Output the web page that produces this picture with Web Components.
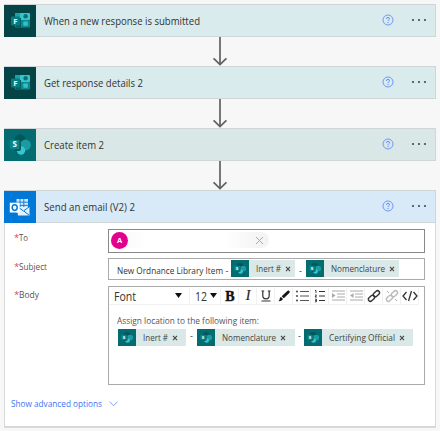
<!DOCTYPE html>
<html lang="en">
<head>
<meta charset="utf-8">
<title>Flow</title>
<style>
html,body{margin:0;height:431px;overflow:hidden;background:#f7f7f7}
body{font-family:"Open Sans","Noto Sans",sans-serif;color:#333;font-size:10px}
</style>
</head>
<body>
<flow-canvas></flow-canvas>
<script>
const define = (name, html, init) => customElements.define(name, class extends HTMLElement {
  connectedCallback() {
    if (this.shadowRoot) return;
    const root = this.attachShadow({ mode: 'open' });
    root.innerHTML = typeof html === 'function' ? html(this) : html;
    if (init) init(this, root);
  }
});

/* A line of text condensed so that it fills the width given in "w". */
define('fit-text', e => `<style>:host{display:block;flex:none;white-space:pre;width:${e.getAttribute('w')}px}span{display:inline-block;transform-origin:0 50%}</style><span>${e.getAttribute('text')}</span>`,
  (e, root) => {
    const s = root.querySelector('span');
    const natural = s.getBoundingClientRect().width;
    if (natural) s.style.transform = `scaleX(${+e.getAttribute('w') / natural})`;
  });

const GLYPHS = {
  forms: `<svg viewBox="0 0 32 32"><rect width="32" height="32" fill="#044447"/><rect x="11" y="8" width="15" height="7" rx="1" fill="#35c5cc"/><rect x="11" y="15" width="15" height="7.5" rx="1" fill="#0b8b90"/><path d="M11 8h5v7h-5z" fill="#229ea4"/><circle cx="21.6" cy="11.3" r="2.2" fill="#097277"/><rect x="19.3" y="16.5" width="4.5" height="4.2" rx=".8" fill="#38bfc6"/><rect x="12" y="13" width="5" height="9" fill="#045c60"/><rect x="7" y="11.6" width="9" height="9" rx=".8" fill="#047d82"/><text x="11.4" y="18.9" text-anchor="middle" font-size="7.8" font-weight="700" fill="#e9f6f6">F</text></svg>`,
  sharepoint: `<svg viewBox="0 0 32 32" preserveAspectRatio="none"><rect width="32" height="32" fill="#036c70"/><circle cx="16" cy="11.5" r="6" fill="#04565b"/><circle cx="21.5" cy="16" r="5.4" fill="#1a9ba1"/><circle cx="17" cy="21.5" r="4.2" fill="#37c6d0"/><path d="M11 14h6v6q0 2-2 2h-4z" fill="#04595d"/><rect x="6" y="10.7" width="9.6" height="9.6" rx="1" fill="#03878a"/><text x="10.8" y="18.4" text-anchor="middle" font-size="8" font-weight="700" fill="#fff">S</text></svg>`,
  outlook: `<svg viewBox="0 0 32 32"><rect width="32" height="32" fill="#0078d7"/><path d="M12.5 8H24v13.5H12.5z" fill="#cfe5f8"/><path d="M12.5 11.2H24M12.5 14.4H24M16 8v11M19.8 8v11" stroke="#0078d7" stroke-width=".9"/><path d="M13 16h12.5v8.5H14z" fill="#e2f0fb"/><path d="M14 16l5.5 4 6-4.4M20 20.2l5.3 4.2" fill="none" stroke="#0078d7" stroke-width="1"/><rect x="5.8" y="11.7" width="9.8" height="9.8" fill="#fff"/><ellipse cx="10.7" cy="16.6" rx="2.5" ry="2.8" fill="none" stroke="#0078d7" stroke-width="1.5"/></svg>`
};
define('app-icon', e => `<style>:host{display:block;flex:none}svg{display:block;width:100%;height:100%}</style>${GLYPHS[e.getAttribute('name')]}`);

define('step-header', e => `<style>
:host{display:flex;align-items:center;height:33px;box-sizing:border-box;border:1px solid #d0d6d7;background:${e.getAttribute('tint')};font-size:10.6px;color:#333}
app-icon{width:32px;height:32px;margin:0 7.5px 0 -1px}
fit-text{line-height:16px}
.help{margin-left:auto;width:12px;height:12px;margin-right:17px;margin-top:-1px}
.dots{width:16px;height:4px;margin-right:8px;margin-top:-1px}
svg{display:block}
</style><app-icon name="${e.getAttribute('icon')}"></app-icon><fit-text w="${e.getAttribute('w')}" text="${e.getAttribute('label')}"></fit-text>
<svg class="help" viewBox="0 0 12 12"><circle cx="6" cy="6" r="5" fill="none" stroke="#7197f8" stroke-width="1"/><path d="M4.5 4.9Q4.5 3.4 6 3.4T7.5 4.8C7.5 5.8 6 5.8 6 7.1" fill="none" stroke="#6089f8" stroke-width="1"/><circle cx="6" cy="8.6" r=".65" fill="#6089f8"/></svg>
<svg class="dots" viewBox="0 0 16 4"><g fill="#494949"><circle cx="2" cy="2" r="1.1"/><circle cx="8" cy="2" r="1.1"/><circle cx="14" cy="2" r="1.1"/></g></svg>`);

define('flow-arrow', `<style>:host{display:block;height:29px}svg{display:block;margin:0 auto}</style><svg width="16" height="29" viewBox="0 0 16 29"><path d="M8 0v28" stroke="#777" stroke-width="2"/><path d="M1.6 21.3L8 27.6l6.4-6.3" fill="none" stroke="#626262" stroke-width="1.8"/></svg>`);

define('field-row', e => `<style>:host{display:flex;align-items:flex-start}
.label{display:flex;width:94px;padding-left:9px;flex:none;color:#555;font-size:9.6px;line-height:14px;padding-top:${e.getAttribute('drop')}px}
i{font-style:normal;color:#e5484d;width:5px;flex:none}</style><div class="label"><i>*</i><fit-text w="${e.getAttribute('w')}" text="${e.getAttribute('label')}"></fit-text></div><slot></slot>`);

define('input-box', e => `<style>:host{display:flex;box-sizing:border-box;width:317px;border:1px solid ${e.getAttribute('line')||'#aaa'};background:#fff}</style><slot></slot>`);

/* Dynamic content token: tile, caption and remove mark. */
define('value-token', e => `<style>:host{display:flex;flex:none;align-items:center;box-sizing:border-box;height:17px;width:${e.getAttribute('size')}px;background:#dae9e8;font-size:9px;color:#444}
app-icon{width:18px;height:17px;margin-right:7px;overflow:hidden}fit-text{line-height:14px}svg{margin-left:4px;margin-top:1px}</style>
<app-icon name="sharepoint"></app-icon><fit-text w="${e.getAttribute('w')}" text="${e.getAttribute('label')}"></fit-text><svg width="6" height="6" viewBox="0 0 6 6"><path d="M1 .8l4 4.4M5 .8L1 5.2" stroke="#444" stroke-width="1.1"/></svg>`);

define('person-pill', `<style>:host{display:flex;align-items:center;width:158px;height:16px;margin:2px 0 0 2px;border-radius:8px;background:linear-gradient(90deg,#f6f6f6,#fff 22%,#fff 72%,#f4f4f4 94%)}
b{width:17px;height:17px;border-radius:50%;background:#e3008c;color:#fff;font-size:7.5px;line-height:17px;text-align:center;flex:none}svg{margin-left:auto;margin-right:5px}</style>
<b>A</b><svg width="9" height="9" viewBox="0 0 9 9"><path d="M1 1l7 7M8 1L1 8" stroke="#aaa" stroke-width="1"/></svg>`);

const LIST = '<path d="M6 3.5h9M6 8h9M6 12.5h9" stroke="#555" stroke-width="1.1"/>';
const INDENT = d => `<g stroke="#aaa" stroke-width="1"><path d="M2 3h13M7 6h8M7 9h8M2 12h13" fill="none"/></g><path d="${d}" fill="#aaa"/>`;
const LINK = c => `<g fill="none" stroke="${c}" stroke-width="1.4"><rect x="-3.5" y="-2" width="7" height="4" rx="2" transform="translate(5.5 10.3) rotate(-43)"/><rect x="-3.5" y="-2" width="7" height="4" rx="2" transform="translate(10.4 5.7) rotate(-43)"/></g>`;
const TOOLS = [
  '<text x="8" y="12.6" text-anchor="middle" font-family="Liberation Serif" font-size="14" font-weight="700" fill="#111" stroke="#111" stroke-width=".4">B</text>',
  '<text x="8" y="12.4" text-anchor="middle" font-family="Liberation Serif" font-size="14" font-style="italic" fill="#222" stroke="#222" stroke-width=".2">I</text>',
  '<path d="M4.8 3v4.8q0 3 3.2 3t3.2-3V3M3.5 3h2.7M9.8 3h2.7M3.5 13h9" fill="none" stroke="#333" stroke-width="1.2"/>',
  '<path d="M13.2 2.8q1.2 1 .1 2.2L7.8 10.2 5.7 8.3l5.6-5.2q1-1 1.9-.3zM5 9l2 1.9Q5.6 13.4 2.4 13.2 3.7 12 3.8 10.4 4 9.2 5 9z" fill="#151515"/>',
  LIST + '<g fill="#555"><circle cx="3" cy="3.5" r="1.1"/><circle cx="3" cy="8" r="1.1"/><circle cx="3" cy="12.5" r="1.1"/></g>',
  '<path d="M7 3.5h6M7 8h6M7 12.5h6" stroke="#333" stroke-width="1.2"/><path d="M3 2.5h1V5M3 7h1.5L3 9h2M3 11.2h1.5v1.3H3.3h1.2v1.3H3" fill="none" stroke="#333" stroke-width=".9"/>',
  INDENT('M2 5v5l3.5-2.5z'), INDENT('M5.5 5v5L2 7.5z'),
  LINK('#333'), LINK('#bbb') + '<path d="M3 3l2 2M11 11l2 2" stroke="#bbb"/>',
  '<path d="M4.5 4L1 8l3.5 4M11.5 4L15 8l-3.5 4M9.5 3l-3 10" fill="none" stroke="#333" stroke-width="1.3"/>'
];
define('format-bar', `<style>:host{display:flex;height:18px;align-items:center;color:#333;font-size:12px}
div{display:flex;align-items:center;height:17px;box-sizing:border-box;border:solid #f1f1f1;border-width:0 1px 1px 0}
.font{width:81px;padding:0 7px 0 5px;justify-content:space-between}.size{width:31px;padding:0 3px 0 5px;justify-content:space-between}
.tool{width:18px;justify-content:center}svg{display:block;flex:none}fit-text{line-height:16px;padding-top:2px}</style>
<div class="font"><fit-text w="22" text="Font"></fit-text><svg width="7" height="5"><path d="M0 0h7L3.5 5z" fill="#111"/></svg></div>
<div class="size"><fit-text w="12" text="12"></fit-text><svg width="7" height="5"><path d="M0 0h7L3.5 5z" fill="#111"/></svg></div>
${TOOLS.map(t => `<div class="tool"><svg width="16" height="16" viewBox="0 0 16 16">${t}</svg></div>`).join('')}`);

define('advanced-toggle', `<style>:host{display:flex;align-items:center;gap:7px;color:#3b74f5;font-size:9.5px;line-height:14px;padding:12px 0 0 6px}</style>
<fit-text w="91" text="Show advanced options"></fit-text><svg width="9" height="6" viewBox="0 0 9 6"><path d="M.5.7l4 4 4-4" fill="none" stroke="#7d9ff5"/></svg>`);

define('email-form', `<style>:host{display:block;height:205px;box-sizing:border-box;background:#fff;border:1px solid #d8d8d8;border-width:0 1px 2px 1px;padding-top:6px}
.to{height:24px}.subject{height:22px}.body{height:99px;flex-direction:column}
field-row+field-row{margin-top:5px}field-row:nth-of-type(3){margin-top:6px}
.line{display:flex;align-items:center;font-size:9px;color:#333}.subject .line{padding-left:8px;height:19px}
.dash{width:11px;text-align:center;flex:none;line-height:12px}
.copy{padding:9px 0 0 8px;font-size:9px;line-height:13px;color:#555}
.tokens{padding-left:9px;margin-top:2px;height:17px}
.low{padding-top:5px}.high{padding-bottom:3px}</style>
<field-row label="To" w="9" drop="2"><input-box class="to" line="#888"><person-pill></person-pill></input-box></field-row>
<field-row label="Subject" w="28" drop="2"><input-box class="subject"><div class="line"><fit-text w="106" text="New Ordnance Library Item" style="padding-top:4px"></fit-text><span class="dash low" style="width:8px">-</span><value-token label="Inert #" w="25" size="64"></value-token><span class="dash low">-</span><value-token label="Nomenclature" w="54" size="93"></value-token></div></input-box></field-row>
<field-row label="Body" w="20" drop="2"><input-box class="body"><format-bar></format-bar><div class="copy"><fit-text w="142" text="Assign location to the following item:"></fit-text></div><div class="line tokens"><value-token label="Inert #" w="25" size="68"></value-token><span class="dash high">-</span><value-token label="Nomenclature" w="54" size="98"></value-token><span class="dash high" style="width:9px">-</span><value-token label="Certifying Official" w="66" size="109"></value-token></div></input-box></field-row>
<advanced-toggle></advanced-toggle>`);

define('flow-canvas', `<style>:host{display:block;padding:4px 4px 0}</style>
<step-header icon="forms" tint="#d9ebed" label="When a new response is submitted" w="156"></step-header><flow-arrow></flow-arrow>
<step-header icon="forms" tint="#d9ebed" label="Get response details 2" w="99"></step-header><flow-arrow></flow-arrow>
<step-header icon="sharepoint" tint="#d9e8e7" label="Create item 2" w="60"></step-header><flow-arrow></flow-arrow>
<step-header icon="outlook" tint="#d8e9f8" label="Send an email (V2) 2" w="91"></step-header>
<email-form></email-form>`);
</script>
</body>
</html>
